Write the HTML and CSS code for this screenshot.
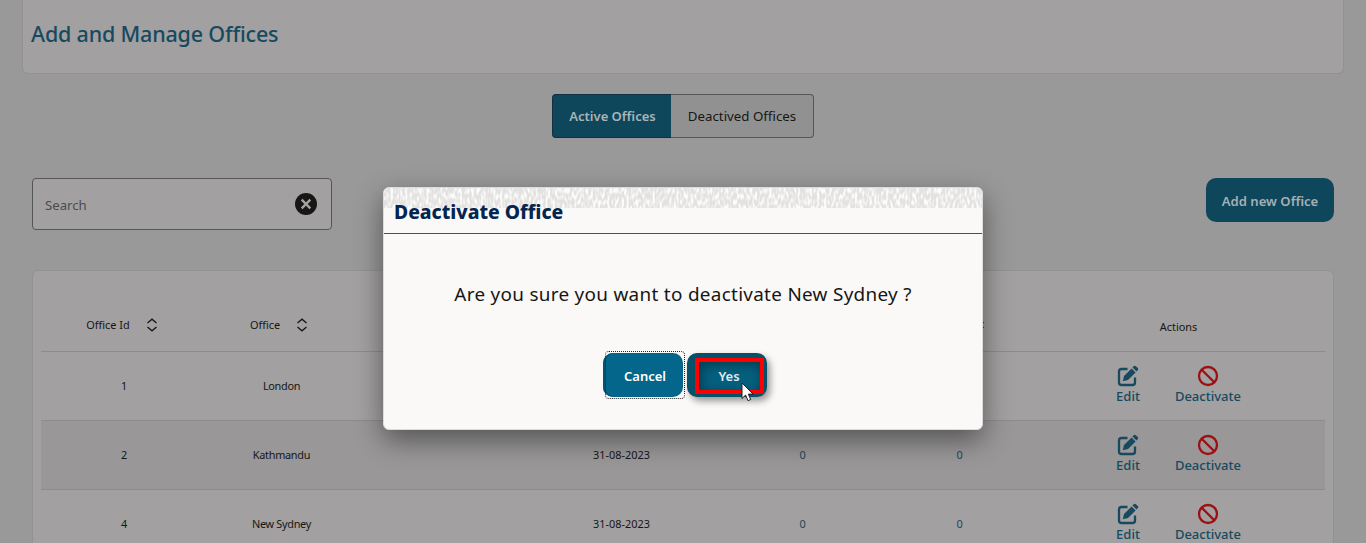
FILE: index.html
```
<!DOCTYPE html>
<html lang="en">
<head>
<meta charset="utf-8">
<title>Add and Manage Offices</title>
<link rel="stylesheet" href="styles.css">
</head>
<body>
<svg class="defs" width="0" height="0" aria-hidden="true">
  <symbol id="edit" viewBox="0 0 22 22"><path d="M10.5 4H4.6Q2 4 2 6.6V17.4Q2 20 4.6 20H15.4Q18 20 18 17.4V12.5" fill="none" stroke="currentColor" stroke-width="2.3"/><path d="M5.8 16.2l1.2-5.2L14.6 3.4l4 4-7.6 7.6zM15.5 2.5l1.4-1.4q1-.8 2 .1l1.9 1.9q.9 1 .1 2l-1.4 1.4z" fill="currentColor"/></symbol>
  <symbol id="ban" viewBox="0 0 22 22"><circle cx="11" cy="11" r="9" fill="none" stroke="currentColor" stroke-width="2.3"/><path d="M4.7 4.7l12.6 12.6" stroke="currentColor" stroke-width="2.3"/></symbol>
  <symbol id="sort" viewBox="0 0 12 14"><path d="M1.5 5L6 1.2 10.5 5M1.5 9L6 12.8 10.5 9" fill="none" stroke="currentColor" stroke-width="1.3"/></symbol>
</svg>
<header class="title-card"><h1>Add and Manage Offices</h1></header>
<nav class="tabs"><button class="tab tab-active">Active Offices</button><button class="tab">Deactived Offices</button></nav>
<div class="toolbar">
  <div class="search"><span>Search</span><svg width="22" height="22" viewBox="0 0 22 22"><circle cx="11" cy="11" r="11" fill="#171615"/><path d="M6.7 6.7l8.6 8.6M15.3 6.7l-8.6 8.6" stroke="#a2a0a0" stroke-width="2.4"/></svg></div>
  <button class="add">Add new Office</button>
</div>
<main class="card">
  <div class="row head">
    <div class="sortable c-id"><span>Office Id</span><svg class="sort"><use href="#sort"/></svg></div>
    <div class="sortable c-office"><span>Office</span><svg class="sort"><use href="#sort"/></svg></div>
    <div></div><div></div><div></div>
    <div class="c-last"><svg class="sort"><use href="#sort"/></svg></div>
    <div class="c-actions">Actions</div>
  </div>
  <div class="row"><div>1</div><div>London</div><div></div><div></div><div></div><div></div><div class="actions"><a><svg><use href="#edit"/></svg><span>Edit</span></a><a><svg class="red"><use href="#ban"/></svg><span>Deactivate</span></a></div></div>
  <div class="row alt"><div>2</div><div>Kathmandu</div><div></div><div class="date">31-08-2023</div><div class="num">0</div><div class="num">0</div><div class="actions"><a><svg><use href="#edit"/></svg><span>Edit</span></a><a><svg class="red"><use href="#ban"/></svg><span>Deactivate</span></a></div></div>
  <div class="row last"><div>4</div><div>New Sydney</div><div></div><div class="date">31-08-2023</div><div class="num">0</div><div class="num">0</div><div class="actions"><a><svg><use href="#edit"/></svg><span>Edit</span></a><a><svg class="red"><use href="#ban"/></svg><span>Deactivate</span></a></div></div>
</main>
<section class="dialog" role="dialog">
  <div class="dialog-head">
    <svg class="texture" width="598" height="20"><filter id="grain" x="0" y="0" width="100%" height="100%"><feTurbulence type="fractalNoise" baseFrequency=".42 .17" numOctaves="1" seed="4"/><feColorMatrix values="0 0 0 0 .98  0 0 0 0 .976  0 0 0 0 .97  4 0 0 0 -1.7"/></filter><rect width="598" height="20" fill="#e3e2e1"/><rect width="598" height="20" filter="url(#grain)"/></svg>
    <h2>Deactivate Office</h2>
  </div>
  <div class="dialog-body">
    <p>Are you sure you want to deactivate New Sydney ?</p>
    <div class="choices"><button class="choice cancel"><span>Cancel</span></button><button class="choice yes"><span>Yes</span></button></div>
  </div>
  <svg class="cursor" width="14" height="20" viewBox="0 0 14 20"><path d="M1 1v15.5l3.6-3.4 2.4 5.6 2.7-1.2-2.4-5.4h4.8z" fill="#fff" stroke="#222" stroke-width="1"/></svg>
</section>
</body>
</html>
```
FILE: styles.css
```
*, *::before, *::after { box-sizing: border-box; }
body { margin: 0; height: 543px; overflow: hidden; background: #999; color: #171615; font-family: "Noto Sans", "Open Sans", sans-serif; position: relative; }
button { font: inherit; border: 0; padding: 0; color: inherit; white-space: nowrap; }
h1, h2, p { margin: 0; }
.defs { position: absolute; }

.title-card { height: 74px; padding: 19px 0 0 8px; margin: 0 22px; background: #a2a0a0; border: 1px solid #939191; border-top: 0; border-radius: 0 0 6px 6px; }
h1 { font-size: 21.5px; line-height: 30px; font-weight: 500; letter-spacing: -.19px; color: #174a5f; }

.tabs { display: flex; justify-content: center; height: 44px; margin-top: 20px; font-size: 13.3px; }
.tab { width: 143px; border: 1px solid #555657; border-left: 0; border-radius: 0 4px 4px 0; background: #929191; }
.tab-active { width: 119px; padding-left: 1px; border: 1px solid #10313e; border-right: 0; border-radius: 4px 0 0 4px; background: #0e475b; color: #a9b4b8; font-weight: 600; font-size: 13px; }

.toolbar { display: flex; justify-content: space-between; align-items: flex-start; margin: 40px 32px 0; }
.search { width: 300px; height: 52px; padding: 0 14px 0 12px; display: flex; align-items: center; justify-content: space-between; border: 1px solid #555657; border-radius: 4px; background: #a2a0a0; color: #4c4c4b; font-size: 13.2px; }
.search span { padding-top: 2px; }
.add { width: 128px; height: 44px; padding-top: 2px; border-radius: 10px; background: #0e475b; color: #a5b0b4; font-size: 13.1px; font-weight: 600; }

.card { margin: 40px 32px 0; padding: 0 8px; height: 273px; overflow: hidden; background: #a2a0a0; border: 1px solid #939191; border-bottom: 0; border-radius: 6px 6px 0 0; font-size: 10.9px; }
.row { display: grid; grid-template-columns: 165px 150px 169px 192px 170px 144px 294px; height: 69px; padding-bottom: 2px; align-items: center; justify-items: center; border-top: 1px solid #8d8b8b; }
.row > div { padding-left: 1px; }
.row:not(.head) > div:nth-child(2) { letter-spacing: -.3px; }
.head { height: 80px; border: 0; padding-top: 29px; }
.alt { background: #999797; }
.last { height: 54px; align-items: start; padding-top: 26px; }
.last > .actions { margin-top: -13px; }
.sortable { display: flex; align-items: center; gap: 16px; }
.sort { width: 12px; height: 14px; display: block; }
.head > .c-id { margin-left: -4px; }
.head > .c-office { margin-left: -5px; }
.head > .c-last { padding-left: 40px; }
.c-actions { padding-top: 4px; }
.num { color: #1c4558; }
.actions { display: flex; gap: 35px; color: #174a5f; font-size: 13px; font-weight: 500; }
.actions a { display: flex; flex-direction: column; align-items: center; line-height: 18px; }
.actions svg { width: 22px; height: 22px; }
.actions .red { color: #9d1011; }

.dialog { position: absolute; left: 383px; top: 187px; width: 600px; height: 243px; background: #faf9f7; border: 1px solid #dddcda; border-radius: 6px; box-shadow: 0 10px 28px rgba(0,0,0,.45); }
.dialog-head { height: 46px; padding: 11px 0 0 10px; border-bottom: 1px solid #107a14; }
.texture { position: absolute; left: 0; top: 0; border-radius: 5px 5px 0 0; }
h2 { position: relative; font-size: 19.3px; line-height: 26px; font-weight: 800; color: #03254f; }
.dialog-body { display: flex; flex-direction: column; align-items: center; }
p { margin-top: 44px; font-size: 18.9px; letter-spacing: .3px; line-height: 32px; white-space: nowrap; }
.choices { display: flex; gap: 4px; margin-top: 43px; padding-left: 4px; font-size: 13px; font-weight: 600; color: #fff; }
.choice { width: 80px; height: 44px; border-radius: 10px; background: #04668a; padding: 2px 0 0 4px; position: relative; }
.cancel { box-shadow: inset 2px 0 #045573; }
.cancel::after { content: ""; position: absolute; inset: -2px -2px -2px 2px; border: 1px dotted #222; border-radius: 4px; }
.yes { background: #065069; color: #e1e9ec; box-shadow: 3px 4px 7px rgba(0,0,0,.4); }
.yes::before { content: ""; position: absolute; left: 8px; top: 5px; width: 69px; height: 36px; border: 4px solid #fe0000; box-shadow: inset 2px 3px 12px #033c50; background: #05607f; }
.yes span { position: relative; }
.cursor { position: absolute; left: 357px; top: 194px; }
```
